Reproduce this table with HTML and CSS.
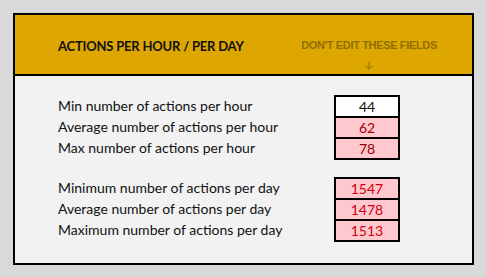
FILE: index.html
```html
<!DOCTYPE html>
<html>
<head>
<meta charset="utf-8">
<link rel="stylesheet" href="styles.css">
</head>
<body>
<div class="card">
  <div class="header">
    <div class="title">ACTIONS PER HOUR / PER DAY</div>
    <div class="note">
      <div class="note-text">DON'T EDIT THESE FIELDS</div>
      <svg class="note-arrow" width="10" height="9" viewBox="0 0 10 9"><path d="M5 0.5V8M1 4.5L5 8.2L9 4.5" fill="none" stroke="#8f6f00" stroke-width="1"/></svg>
    </div>
  </div>
  <div class="content">
    <div class="group">
      <div class="row"><div class="label">Min number of actions per hour</div><div class="cell input">44</div></div>
      <div class="row"><div class="label">Average number of actions per hour</div><div class="cell bad">62</div></div>
      <div class="row"><div class="label">Max number of actions per hour</div><div class="cell bad">78</div></div>
    </div>
    <div class="group">
      <div class="row"><div class="label">Minimum number of actions per day</div><div class="cell bad bright">1547</div></div>
      <div class="row"><div class="label">Average number of actions per day</div><div class="cell bad bright">1478</div></div>
      <div class="row"><div class="label">Maximum number of actions per day</div><div class="cell bad bright">1513</div></div>
    </div>
  </div>
</div>
</body>
</html>
```
FILE: styles.css
```css
html, body {
  margin: 0;
  padding: 0;
}
body {
  background: #d9d9d9;
  width: 486px;
  height: 277px;
  padding: 13px 0 0 13px;
  box-sizing: border-box;
  font-family: Lato, "Open Sans", sans-serif;
}
.card {
  width: 461px;
  height: 252px;
  box-sizing: border-box;
  border: 2px solid #000;
  background: #f2f2f2;
  display: flex;
  flex-direction: column;
}
.header {
  height: 61px;
  box-sizing: border-box;
  background: #dea600;
  border-bottom: 2px solid #000;
  display: flex;
  align-items: flex-start;
  padding-left: 43px;
}
.title {
  margin-top: 23px;
  font-weight: 700;
  font-size: 13px;
  letter-spacing: -0.2px;
  color: #111;
  width: 244px;
}
.note {
  width: 134px;
  text-align: center;
  color: #8f6f00;
  display: flex;
  flex-direction: column;
  align-items: center;
}
.note-text {
  margin-top: 24px;
  font-family: "Liberation Sans", Arial, sans-serif;
  font-weight: 700;
  font-size: 11px;
  letter-spacing: -0.35px;
  line-height: 13px;
  white-space: nowrap;
}
.note-arrow {
  margin-top: 9px;
  display: block;
}
.content {
  padding: 19px 0 0 43px;
  display: flex;
  flex-direction: column;
  gap: 19px;
}
.group {
  display: flex;
  flex-direction: column;
}
.row {
  display: flex;
  align-items: center;
  height: 21px;
}
.label {
  width: 276px;
  font-size: 14px;
  color: #111;
}
.cell {
  width: 66px;
  height: 23px;
  box-sizing: border-box;
  border: 2px solid #000;
  text-align: center;
  font-size: 14px;
  line-height: 19px;
  align-self: flex-start;
}
.input {
  background: #fff;
  color: #111;
}
.bad {
  background: #ffc7ce;
  color: #9c0006;
}
.bright {
  color: #d0000c;
}
```
